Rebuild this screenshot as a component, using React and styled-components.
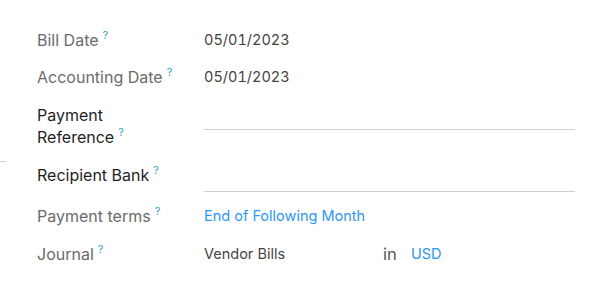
import React from "react";
import styled, { createGlobalStyle } from "styled-components";

const Global = createGlobalStyle`
  html, body { margin: 0; padding: 0; background: #fff; }
  body { font-family: Inter, Roboto, sans-serif; }
`;

const Page = styled.div`
  display: flex;
  width: 604px;
  height: 291px;
  box-sizing: border-box;
  padding-top: 29px;
`;

const Edge = styled.div`
  width: 37px;
  flex: none;
  padding-top: 132px;
  box-sizing: border-box;
`;

const EdgeLine = styled.div`
  width: 6px;
  height: 1px;
  background: #d0d0d0;
`;

const Form = styled.div`
  display: flex;
  flex-direction: column;
  width: 538px;
`;

const Row = styled.div`
  display: grid;
  grid-template-columns: 167px 371px;
  height: ${(p) => p.$h}px;
  align-items: start;
`;

const Label = styled.div`
  font-size: 16px;
  line-height: 22px;
  color: ${(p) => (p.$strong ? "#1f1f1f" : "#6b6b6b")};
`;

const Help = styled.sup`
  font-size: 11px;
  color: #3b9fc6;
  margin-left: 4px;
  vertical-align: top;
  position: relative;
  top: -5px;
`;

const Value = styled.div`
  font-size: 14.5px;
  line-height: 22px;
  color: #444;
  display: flex;
  align-items: center;
`;

const DateText = styled.span`
  font-variant-numeric: tabular-nums;
`;

const Link = styled.span`
  color: #2b96ef;
`;

const Input = styled.div`
  height: ${(p) => p.$h}px;
  border-bottom: 1px solid #cfcfcf;
  box-sizing: border-box;
`;

const Journal = styled.span`
  width: 179px;
`;

const In = styled.span`
  font-size: 16.5px;
  color: #555;
  width: 28px;
`;

export default function App() {
  return (
    <>
      <Global />
      <Page>
        <Edge>
          <EdgeLine />
        </Edge>
        <Form>
          <Row $h={37}>
            <Label>Bill Date<Help>?</Help></Label>
            <Value><DateText>05/01/2023</DateText></Value>
          </Row>
          <Row $h={38}>
            <Label>Accounting Date<Help>?</Help></Label>
            <Value><DateText>05/01/2023</DateText></Value>
          </Row>
          <Row $h={60}>
            <Label $strong>Payment<br />Reference<Help>?</Help></Label>
            <Input $h={26} />
          </Row>
          <Row $h={41}>
            <Label $strong>Recipient Bank<Help>?</Help></Label>
            <Input $h={28} />
          </Row>
          <Row $h={38}>
            <Label>Payment terms<Help>?</Help></Label>
            <Value><Link>End of Following Month</Link></Value>
          </Row>
          <Row $h={30}>
            <Label>Journal<Help>?</Help></Label>
            <Value>
              <Journal>Vendor Bills</Journal>
              <In>in</In>
              <Link>USD</Link>
            </Value>
          </Row>
        </Form>
      </Page>
    </>
  );
}
